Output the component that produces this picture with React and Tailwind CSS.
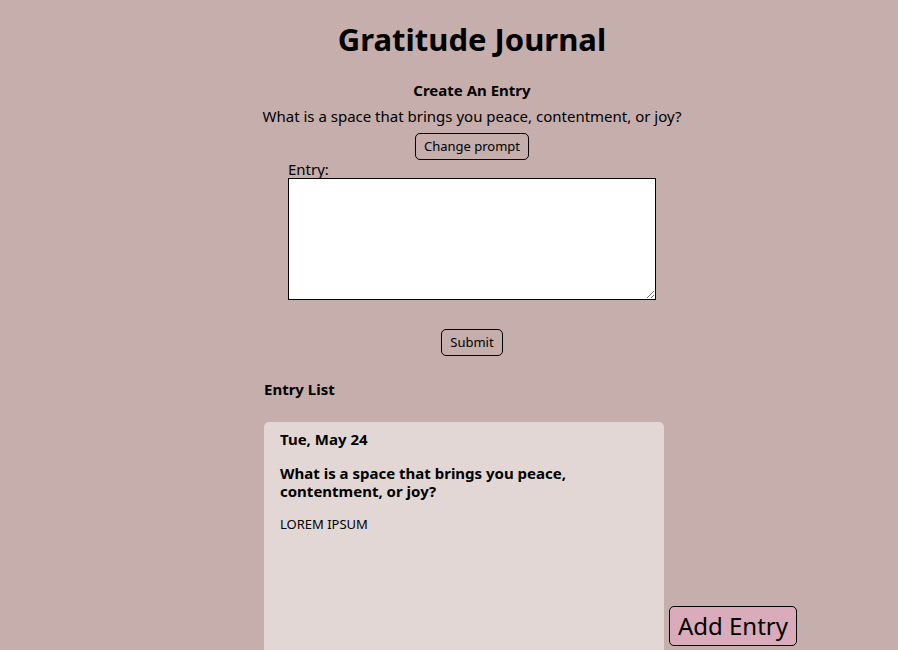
const outlineButton =
  "rounded-[5px] border border-black px-2 text-[13px] leading-[25px]";

export default function App() {
  return (
    <main className="flex min-h-screen flex-col items-center bg-[#c5aeab] pl-[46px] font-['Noto_Sans','Open_Sans',sans-serif] text-[15px] text-black">
      <h1 className="mt-[18px] text-[31px] leading-[42px] font-bold">Gratitude Journal</h1>
      <section className="flex flex-col items-center">
        <h2 className="mt-5 leading-5 font-bold">Create An Entry</h2>
        <p className="mt-1 leading-6">What is a space that brings you peace, contentment, or joy?</p>
        <button type="button" className={`mt-[5px] ${outlineButton}`}>Change prompt</button>
        <form className="flex flex-col items-center" onSubmit={(event) => event.preventDefault()}>
          <label htmlFor="entry" className="self-start leading-[18px]">Entry:</label>
          <textarea id="entry" className="block h-[122px] w-[368px] resize border border-black bg-white p-1" />
          <button type="submit" className={`mt-[29px] ${outlineButton}`}>Submit</button>
        </form>
      </section>
      <section className="flex w-[416px] grow flex-col pr-4">
        <h2 className="mt-6 leading-[18px] font-bold">Entry List</h2>
        <article className="mt-6 grow rounded-t-[5px] bg-[#e2d7d5] px-4 pt-2">
          <h3 className="leading-[18px] font-bold">Tue, May 24</h3>
          <h3 className="mt-4 leading-[18px] font-bold">What is a space that brings you peace, contentment, or joy?</h3>
          <p className="mt-4 text-[13px] leading-4">LOREM IPSUM</p>
        </article>
      </section>
      <button type="button" className="fixed right-[101px] bottom-1 h-10 rounded-[5px] border border-black bg-[#d9abbb] px-2 text-[24px] leading-9">
        Add Entry
      </button>
    </main>
  );
}
